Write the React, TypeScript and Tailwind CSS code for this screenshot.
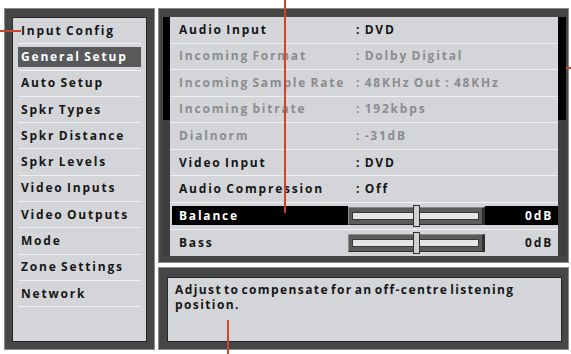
type Row = {
  label: string;
  value: string;
  dim?: boolean;
};

const menu = [
  'Input Config',
  'General Setup',
  'Auto Setup',
  'Spkr Types',
  'Spkr Distance',
  'Spkr Levels',
  'Video Inputs',
  'Video Outputs',
  'Mode',
  'Zone Settings',
  'Network',
];

const rows: Row[] = [
  { label: 'Audio Input', value: ': DVD' },
  { label: 'Incoming Format', value: ': Dolby Digital', dim: true },
  { label: 'Incoming Sample Rate', value: ': 48KHz Out : 48KHz', dim: true },
  { label: 'Incoming bitrate', value: ': 192kbps', dim: true },
  { label: 'Dialnorm', value: ': -31dB', dim: true },
  { label: 'Video Input', value: ': DVD' },
  { label: 'Audio Compression', value: ': Off' },
];

const Slider = () => {
  return (
    <div className="relative w-[137px] h-[18px] bg-[#5c5c5c] border-t border-l border-[#8a8a8a] border-r-[3px] border-b border-r-[#2e2e2e] border-b-[#2e2e2e] flex items-center px-[3px]">
      <div className="w-full h-[8px] bg-[#e4e5e7] border border-[#3a3a3a]" />
      <div className="absolute left-[64px] top-[-3px] w-[7px] h-[22px] bg-[#cfd0d2] border border-[#333]" />
    </div>
  );
};

const App = () => {
  return (
    <div className="relative w-[571px] h-[354px] bg-white overflow-hidden font-['Open_Sans',sans-serif] font-bold text-[12px] tracking-[1.8px] [word-spacing:-1.5px]">
      <div className="flex gap-[3px] pt-[8px] pl-[4px] pr-[2px]">
        {/* left menu */}
        <div className="w-[151px] h-[342px] bg-[#464646] border border-[#8c8c8c] pt-[8px] pl-[7px] pr-[7px] pb-[7px]">
          <div className="h-full bg-[#d4d5d8] border border-[#262626] flex flex-col">
            {menu.map((m, i) => (
              <div key={m} className="h-[26.3px] shrink-0 px-[5px] flex flex-col">
                <div className={'flex-1 flex items-center whitespace-nowrap ' + (i === 1 ? 'my-[3px] bg-[#58595b] text-white pl-[3px]' : 'pl-[3px] text-[#161616]')}>
                  {m}
                </div>
                <div className="h-[1px] bg-[#eef0f2]" />
              </div>
            ))}
          </div>
        </div>

        <div className="w-[411px] flex flex-col gap-[4px]">
          {/* settings */}
          <div className="h-[255px] bg-[#464646] border border-[#8c8c8c] pt-[8px] pl-[4px] pr-[2px] pb-[6px] flex">
            <div className="w-[7px] flex flex-col">
              <div className="h-[103px] bg-black" />
              <div className="flex-1 bg-[#3e3e3e]" />
            </div>
            <div className="w-[388px] bg-[#d4d5d8] flex flex-col">
              {rows.map((r) => (
                <div key={r.label} className="flex-1 flex flex-col">
                  <div className={'flex-1 flex items-center pl-[9px] ' + (r.dim ? 'text-[#8b8c8f]' : 'text-[#161616]')}>
                    <span className="w-[177px] shrink-0 whitespace-nowrap">{r.label}</span>
                    <span className="whitespace-nowrap">{r.value}</span>
                  </div>
                  <div className="h-[1px] bg-[#eef0f2]" />
                </div>
              ))}
              <div className="flex-1 flex flex-col">
                <div className="flex-1 flex items-center">
                  <div className="h-[19px] w-[176px] ml-[2px] bg-black text-white flex items-center pl-[7px]">Balance</div>
                  <Slider />
                  <div className="h-[19px] flex-1 bg-black text-white flex items-center justify-end pr-[5px]">0dB</div>
                </div>
                <div className="h-[1px] bg-[#eef0f2]" />
              </div>
              <div className="flex-1 flex items-center">
                <div className="w-[176px] ml-[2px] text-[#161616] pl-[7px]">Bass</div>
                <Slider />
                <div className="flex-1 text-right text-[#161616] pr-[5px]">0dB</div>
              </div>
            </div>
            <div className="w-[8px] flex flex-col">
              <div className="h-[103px] bg-black" />
              <div className="flex-1 bg-[#3e3e3e]" />
            </div>
          </div>

          {/* help */}
          <div className="h-[83px] bg-[#464646] border border-[#8c8c8c] pt-[9px] pl-[8px] pr-[6px] pb-[7px]">
            <div className="h-full bg-[#d4d5d8] border border-[#262626] px-[7px] pt-[4px] leading-[15px] text-[#161616] tracking-[1.4px] [word-spacing:-2.5px]">
              Adjust to compensate for an off-centre listening position.
            </div>
          </div>
        </div>
      </div>

      {/* annotation leaders */}
      <div className="absolute left-0 top-[30px] w-[21px] h-[2px] bg-[#c8462c]" />
      <div className="absolute left-[284px] top-0 w-[2px] h-[213px] bg-[#c8462c]" />
      <div className="absolute right-0 top-[67px] w-[5px] h-[2px] bg-[#c8462c]" />
      <div className="absolute left-[227px] top-[320px] w-[2px] h-[34px] bg-[#c8462c]" />
    </div>
  );
};

export default App;
